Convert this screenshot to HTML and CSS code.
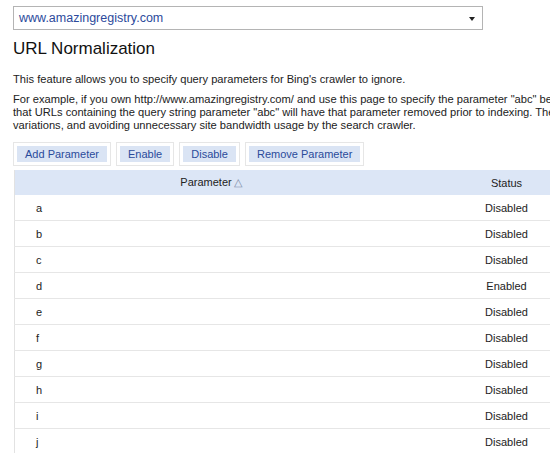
FILE: index.html
```html
<!DOCTYPE html>
<html lang="en">
<head>
    <meta charset="UTF-8">
    <title>URL Normalization</title>
    <link rel="stylesheet" href="styles.css">
</head>
<body>
    <div class="page">
        <!-- Site picker -->
        <div class="site-select">
            <span class="site-name">www.amazingregistry.com</span>
            <span class="site-arrow"></span>
        </div>

        <h1 class="page-title">URL Normalization</h1>

        <p class="intro">This feature allows you to specify query parameters for Bing's crawler to ignore.</p>
        <p class="intro example">
            <span>For example, if you own http://www.amazingregistry.com/ and use this page to specify the parameter "abc" be ignored, this means</span>
            <span>that URLs containing the query string parameter "abc" will have that parameter removed prior to indexing. These URLs will be treated as the same,</span>
            <span>variations, and avoiding unnecessary site bandwidth usage by the search crawler.</span>
        </p>

        <!-- Toolbar -->
        <div class="toolbar">
            <div class="tool"><button>Add Parameter</button></div>
            <div class="tool"><button>Enable</button></div>
            <div class="tool"><button>Disable</button></div>
            <div class="tool"><button>Remove Parameter</button></div>
        </div>

        <table class="params">
            <thead>
                <tr>
                    <th class="col-param">Parameter<span class="sort">&#9651;</span></th>
                    <th class="col-status">Status</th>
                </tr>
            </thead>
            <tbody>
                <tr><td class="col-param">a</td><td class="col-status">Disabled</td></tr>
                <tr><td class="col-param">b</td><td class="col-status">Disabled</td></tr>
                <tr><td class="col-param">c</td><td class="col-status">Disabled</td></tr>
                <tr><td class="col-param">d</td><td class="col-status">Enabled</td></tr>
                <tr><td class="col-param">e</td><td class="col-status">Disabled</td></tr>
                <tr><td class="col-param">f</td><td class="col-status">Disabled</td></tr>
                <tr><td class="col-param">g</td><td class="col-status">Disabled</td></tr>
                <tr><td class="col-param">h</td><td class="col-status">Disabled</td></tr>
                <tr><td class="col-param">i</td><td class="col-status">Disabled</td></tr>
                <tr><td class="col-param">j</td><td class="col-status">Disabled</td></tr>
            </tbody>
        </table>
    </div>
</body>
</html>
```

FILE: styles.css
```css
/* General */
html, body {
    margin: 0;
    padding: 0;
    overflow: hidden;
    background: #fff;
}

body {
    font-family: 'Liberation Sans', Arial, sans-serif;
    font-size: 11px;
    color: #222;
}

.page {
    padding: 6px 0 0 13px;
    width: 700px;
}

/* Site picker */
.site-select {
    width: 456px;
    height: 22px;
    border: 1px solid #b4b4b4;
    display: flex;
    align-items: center;
    justify-content: space-between;
    padding: 0 7px 0 5px;
}

.site-name {
    color: #2c4a9c;
    font-size: 12.5px;
}

.site-arrow {
    width: 0;
    height: 0;
    border-left: 3px solid transparent;
    border-right: 3px solid transparent;
    border-top: 4px solid #222;
    margin-top: 1px;
}

/* Title + text */
.page-title {
    font-size: 17px;
    font-weight: normal;
    color: #111;
    margin: 9px 0 14px;
}

.intro {
    margin: 0 0 7px;
    font-size: 11.15px;
    line-height: 13px;
    white-space: nowrap;
}

.example span {
    display: block;
}

/* Toolbar */
.toolbar {
    display: flex;
    gap: 5px;
    margin-top: 10px;
}

.tool {
    border: 1px solid #e6e6e6;
    padding: 3px;
}

.tool button {
    display: block;
    font-family: inherit;
    font-size: 11px;
    color: #2a4b9b;
    background: #dae4f4;
    border: none;
    height: 16px;
    line-height: 16px;
    padding: 0 8px;
    margin: 0;
}

/* Table */
.params {
    margin-top: 4px;
    margin-left: 1px;
    border-collapse: collapse;
    border-left: 1px solid #e2e2e2;
    width: 592px;
}

.params th {
    background: #dce6f6;
    font-weight: normal;
    color: #222;
    height: 25px;
    padding: 0;
}

.params td {
    height: 25px;
    padding: 0;
    border-bottom: 1px solid #e6e6e6;
}

.params th.col-param {
    width: 392px;
    text-align: center;
}

.params td.col-param {
    padding-left: 21px;
}

.col-status {
    text-align: center;
}

.sort {
    color: #7c8ca8;
    font-size: 11px;
    margin-left: 2px;
}
```
